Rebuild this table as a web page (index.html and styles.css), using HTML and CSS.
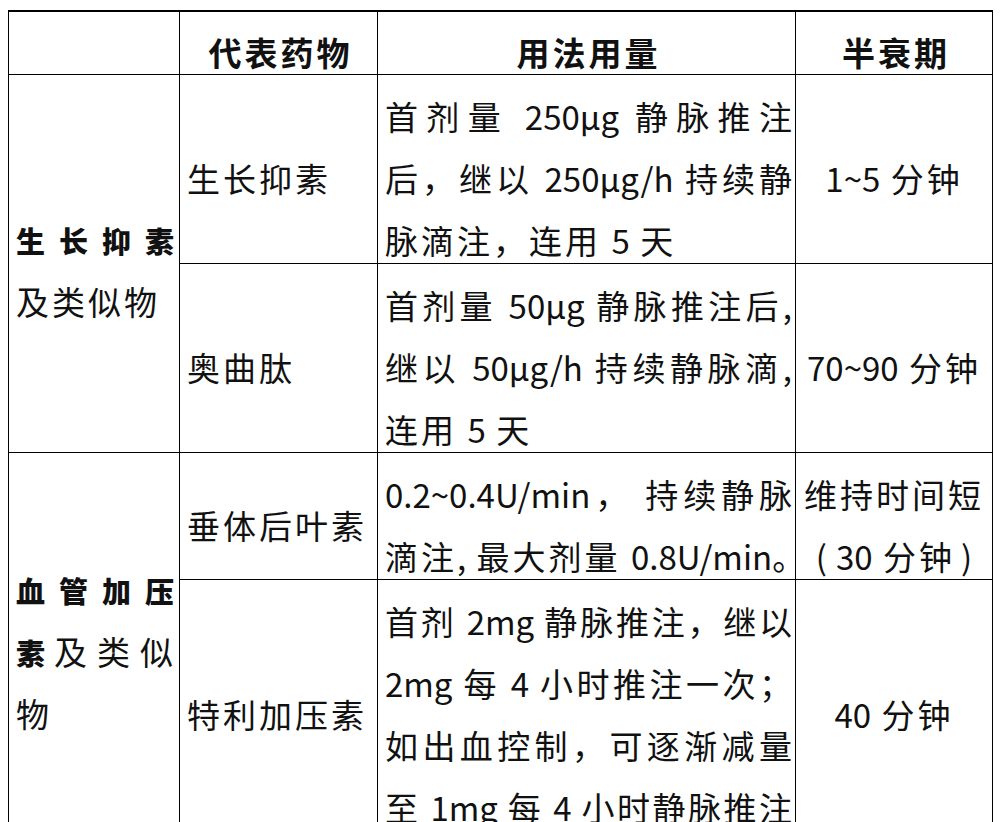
FILE: index.html
```html
<!DOCTYPE html>
<html lang="zh-CN">
<head>
<meta charset="utf-8">
<title>药物用法用量表</title>
<link rel="stylesheet" href="styles.css">
</head>
<body>
<table class="drug-table">
  <colgroup>
    <col class="c1"><col class="c2"><col class="c3"><col class="c4">
  </colgroup>
  <thead>
    <tr class="head">
      <th></th>
      <th><div class="ln">代表药物</div></th>
      <th><div class="ln">用法用量</div></th>
      <th><div class="ln">半衰期</div></th>
    </tr>
  </thead>
  <tbody>
    <tr>
      <td rowspan="2" class="cat">
        <div class="ln jl tight"><span class="strong">生长抑素</span></div>
        <div class="ln">及类似物</div>
      </td>
      <td class="name"><div class="ln">生长抑素</div></td>
      <td class="dose">
        <div class="ln jl">首剂量 <span class="n">250μg</span> 静脉推注</div>
        <div class="ln jl">后，继以 <span class="n">250μg/h</span> 持续静</div>
        <div class="ln">脉滴注，连用 <span class="n">5</span> 天</div>
      </td>
      <td class="half"><div class="ln"><span class="n">1~5</span> 分钟</div></td>
    </tr>
    <tr>
      <td class="name"><div class="ln">奥曲肽</div></td>
      <td class="dose">
        <div class="ln jl">首剂量 <span class="n">50μg</span> 静脉推注后<span class="n">,</span></div>
        <div class="ln jl">继以 <span class="n">50μg/h</span> 持续静脉滴<span class="n">,</span></div>
        <div class="ln">连用 <span class="n">5</span> 天</div>
      </td>
      <td class="half"><div class="ln"><span class="n">70~90</span> 分钟</div></td>
    </tr>
    <tr>
      <td rowspan="2" class="cat">
        <div class="ln jl"><span class="strong">血管加压</span></div>
        <div class="ln jl"><span class="strong">素</span>及类似</div>
        <div class="ln">物</div>
      </td>
      <td class="name"><div class="ln">垂体后叶素</div></td>
      <td class="dose">
        <div class="ln jl"><span class="n">0.2~0.4U/min</span>， 持续静脉</div>
        <div class="ln">滴注<span class="n">,</span> 最大剂量 <span class="n">0.8U/min</span>。</div>
      </td>
      <td class="half">
        <div class="ln">维持时间短</div>
        <div class="ln"><span class="po">(</span><span class="n">30</span> 分钟<span class="pc">)</span></div>
      </td>
    </tr>
    <tr>
      <td class="name"><div class="ln">特利加压素</div></td>
      <td class="dose">
        <div class="ln jl">首剂 <span class="n">2mg</span> 静脉推注，继以</div>
        <div class="ln jl"><span class="n">2mg</span> 每 <span class="n">4</span> 小时推注一次；</div>
        <div class="ln jl">如出血控制，可逐渐减量</div>
        <div class="ln jl">至 <span class="n">1mg</span> 每 <span class="n">4</span> 小时静脉推注</div>
      </td>
      <td class="half"><div class="ln"><span class="n">40</span> 分钟</div></td>
    </tr>
  </tbody>
</table>
</body>
</html>
```

FILE: styles.css
```css
html, body {
  margin: 0;
  padding: 0;
  overflow: hidden;
  background: #ffffff;
}

body {
  padding: 10px 0 0 8px;
  font-family: "Noto Sans CJK SC", "Noto Sans", sans-serif;
  color: #111111;
}

.drug-table {
  border-collapse: collapse;
  table-layout: fixed;
  width: 984px;
  font-size: 33px;
  letter-spacing: 3px;
}

.c1 { width: 171px; }
.c2 { width: 198px; }
.c3 { width: 418px; }
.c4 { width: 197px; }

.drug-table th,
.drug-table td {
  border: 1px solid #000000;
  padding: 1px 3px 1px 7px;
  vertical-align: middle;
  text-align: left;
  font-weight: 400;
}

.drug-table thead th {
  border-top: 2px solid #000000;
  padding-top: 0;
  padding-bottom: 0;
  text-align: center;
  font-weight: 700;
}

.ln {
  padding-top: 18px;
  height: 44px;
  line-height: 44px;
  white-space: nowrap;
}

.ln.tight {
  padding-top: 13px;
}

.jl {
  white-space: normal;
  text-align: justify;
  text-align-last: justify;
}

.dose .jl {
  letter-spacing: 0;
}

.n {
  letter-spacing: 0;
}

.po {
  letter-spacing: 0;
  margin-right: 9px;
}

.pc {
  letter-spacing: 0;
  margin-left: 6px;
}

.drug-table td.half {
  padding-left: 2px;
  padding-right: 2px;
  text-align: center;
}

.drug-table td.cat {
  padding-right: 3px;
}

.strong {
  font-size: 29px;
  font-weight: 900;
  letter-spacing: 2px;
}
```
